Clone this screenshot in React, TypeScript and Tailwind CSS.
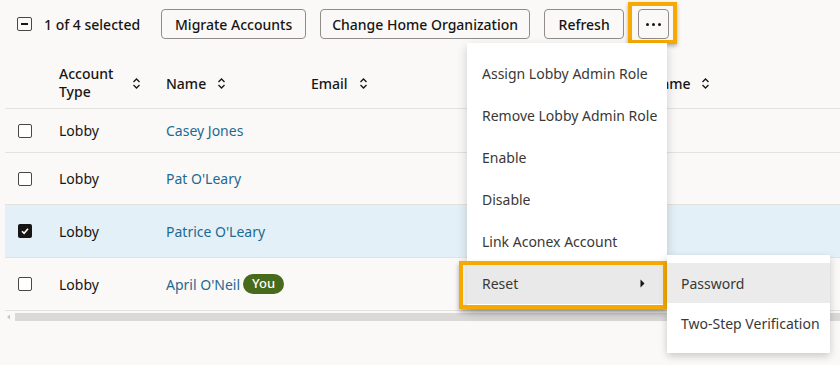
import React from "react";

type Row = {
  type: string;
  name: string;
  selected?: boolean;
  you?: boolean;
  height: string;
};

const rows: Row[] = [
  { type: "Lobby", name: "Casey Jones", height: "h-[44px]" },
  { type: "Lobby", name: "Pat O'Leary", height: "h-[52px]" },
  { type: "Lobby", name: "Patrice O'Leary", selected: true, height: "h-[53px]" },
  { type: "Lobby", name: "April O'Neil", you: true, height: "h-[53px]" },
];

const menuItems = [
  "Assign Lobby Admin Role",
  "Remove Lobby Admin Role",
  "Enable",
  "Disable",
  "Link Aconex Account",
];

// Small up/down chevron used in the column headers
const SortIcon = () => (
  <svg width="9" height="13" viewBox="0 0 9 13" className="ml-[11px] shrink-0">
    <path d="M1.5 5 L4.5 2 L7.5 5" fill="none" stroke="#161513" strokeWidth="1.3" />
    <path d="M1.5 8 L4.5 11 L7.5 8" fill="none" stroke="#161513" strokeWidth="1.3" />
  </svg>
);

const Checkbox = ({ checked }: { checked?: boolean }) =>
  checked ? (
    <div className="w-[14px] h-[14px] rounded-[2px] bg-[#161513] flex items-center justify-center">
      <svg width="10" height="10" viewBox="0 0 10 10">
        <path d="M2 5.2 L4.1 7.3 L8 2.8" fill="none" stroke="#fff" strokeWidth="1.6" />
      </svg>
    </div>
  ) : (
    <div className="w-[14px] h-[14px] rounded-[2px] border-[1.5px] border-[#4a4643] bg-white" />
  );

const HeaderCell = ({ label, className }: { label: string; className: string }) => (
  <div className={`flex items-center pl-[14px] ${className}`}>
    <span>{label}</span>
    <SortIcon />
  </div>
);

export default function App() {
  return (
    <div className="relative w-[840px] h-[365px] overflow-hidden bg-[#fbf9f8] text-[14px] text-[#161513] font-['Noto_Sans',sans-serif]">
      {/* Toolbar */}
      <div className="flex items-center h-[48px] pl-[17px]">
        <div className="w-[15px] h-[14px] rounded-[2px] border-[1.5px] border-[#4a4643] flex items-center justify-center">
          <div className="w-[7px] h-[1.5px] bg-[#161513]" />
        </div>
        <span className="ml-[12px] font-medium">1 of 4 selected</span>
        <button className="ml-[21px] w-[145px] h-[30px] rounded-[4px] border border-[#8f8c89] font-medium">
          Migrate Accounts
        </button>
        <button className="ml-[14px] w-[210px] h-[30px] rounded-[4px] border border-[#8f8c89] font-medium">
          Change Home Organization
        </button>
        <button className="ml-[14px] w-[80px] h-[30px] rounded-[4px] border border-[#8f8c89] font-medium">
          Refresh
        </button>
        <button className="ml-[14px] w-[31px] h-[30px] rounded-[4px] border border-[#8f8c89] flex items-center justify-center gap-[3px]">
          <span className="w-[3px] h-[3px] rounded-full bg-[#161513]" />
          <span className="w-[3px] h-[3px] rounded-full bg-[#161513]" />
          <span className="w-[3px] h-[3px] rounded-full bg-[#161513]" />
        </button>
      </div>

      {/* Table */}
      <div className="ml-[5px] mt-[10px]">
        <div className="flex h-[51px] border-b border-[#e4e2df] font-medium">
          <div className="w-[40px]" />
          <div className="w-[107px] flex items-center pl-[14px]">
            <span className="w-[62px] leading-[18px]">Account Type</span>
            <SortIcon />
          </div>
          <HeaderCell label="Name" className="w-[145px]" />
          <HeaderCell label="Email" className="w-[287px]" />
          <HeaderCell label="Display Name" className="flex-1" />
        </div>

        {rows.map((row) => (
          <div
            key={row.name}
            className={`flex items-center border-b border-[#e4e2df] ${row.height} ${row.selected ? "bg-[#e4f0f7]" : ""}`}
          >
            <div className="w-[40px] pl-[13px]">
              <Checkbox checked={row.selected} />
            </div>
            <div className="w-[107px] pl-[14px]">{row.type}</div>
            <div className="flex items-center pl-[14px] text-[#1d6a92]">
              {row.name}
              {row.you && (
                <span className="ml-[3px] h-[20px] px-[9px] rounded-full bg-[#476a1c] text-white text-[13px] font-medium flex items-center">
                  You
                </span>
              )}
            </div>
          </div>
        ))}

        {/* Horizontal scrollbar */}
        <div className="flex items-center mt-[2px] h-[8px]">
          <svg width="5" height="6" viewBox="0 0 5 6" className="ml-[1px]">
            <path d="M4 0.5 L1 3 L4 5.5 Z" fill="#c8c6c4" />
          </svg>
          <div className="ml-[4px] flex-1 h-[8px] bg-[#dad9d8]" />
        </div>
      </div>

      {/* Ellipsis highlight */}
      <div className="absolute left-[628px] top-[2px] w-[49px] h-[42px] border-[4px] border-[#f6a900] shadow-[0_2px_4px_rgba(0,0,0,0.3)]" />

      {/* Actions menu */}
      <div className="absolute left-[467px] top-[43px] w-[200px] bg-white pt-[9px] pb-[5px] shadow-[0_4px_10px_rgba(0,0,0,0.18)] text-[#3a3836]">
        {menuItems.map((item) => (
          <div key={item} className="h-[42px] flex items-center pl-[15px]">
            {item}
          </div>
        ))}
        <div className="h-[42px] flex items-center justify-between pl-[15px] pr-[22px] bg-[#e9e9e9]">
          <span>Reset</span>
          <svg width="5" height="9" viewBox="0 0 5 9">
            <path d="M0.5 0.5 L4.5 4.5 L0.5 8.5 Z" fill="#161513" />
          </svg>
        </div>
      </div>

      {/* Reset highlight */}
      <div className="absolute left-[459px] top-[261px] w-[208px] h-[48px] border-[4px] border-[#f6a900] shadow-[0_3px_5px_rgba(0,0,0,0.3)]" />

      {/* Reset submenu */}
      <div className="absolute left-[667px] top-[255px] w-[163px] bg-white pt-[8px] pb-[9px] shadow-[0_3px_8px_rgba(0,0,0,0.2)] text-[#3a3836]">
        <div className="h-[40px] flex items-center pl-[14px] bg-[#ebebeb]">Password</div>
        <div className="h-[41px] flex items-center pl-[14px]">Two-Step Verification</div>
      </div>
    </div>
  );
}
